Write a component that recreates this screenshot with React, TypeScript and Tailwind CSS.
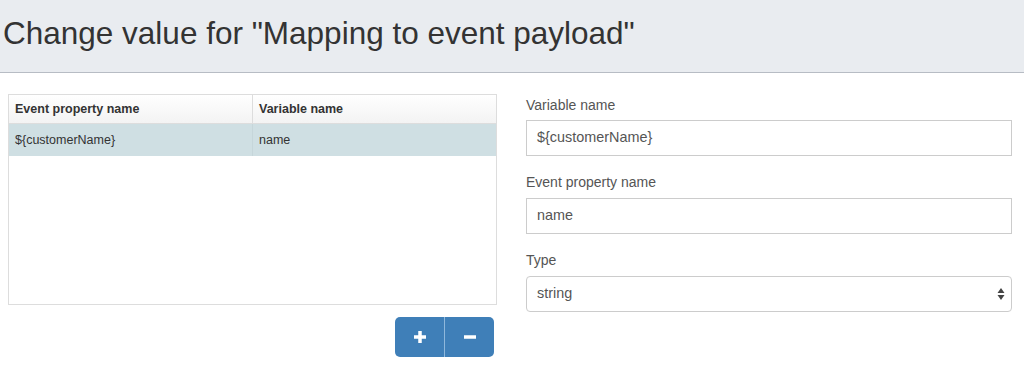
export default function App() {
  return (
    <div className="w-[1024px] h-[382px] bg-white text-[#333] overflow-hidden" style={{ fontFamily: '"Liberation Sans", Arial, sans-serif' }}>
      <div className="h-[73px] bg-[#e9ecf0] border-b border-[#b7bcc4] flex items-center pl-[3px] pb-[4px]">
        <h1 className="text-[31.5px] text-[#333] leading-none">Change value for "Mapping to event payload"</h1>
      </div>

      <div className="flex pt-[21px] pl-[8px]">
        <div className="w-[489px] flex flex-col">
          <div className="h-[211px] border border-[#ddd] bg-white">
            <div className="flex h-[29px] border-b border-[#ddd] bg-gradient-to-b from-white to-[#f3f3f3] text-[12.5px] font-bold">
              <div className="w-[244px] border-r border-[#ddd] flex items-center pl-[6px]">Event property name</div>
              <div className="flex-1 flex items-center pl-[6px]">Variable name</div>
            </div>
            <div className="flex h-[32px] bg-[#cfdfe3] text-[12.5px]">
              <div className="w-[244px] border-r border-[#c6d6da] flex items-center pl-[6px]">${'{'}customerName{'}'}</div>
              <div className="flex-1 flex items-center pl-[6px]">name</div>
            </div>
          </div>
          <div className="flex justify-end pr-[3px] mt-[12px]">
            <div className="flex h-[40px] rounded-[5px] overflow-hidden bg-[#3f7fb8]">
              <button className="w-[50px] flex items-center justify-center border-r border-[#8fb8dc]">
                <svg width="16" height="16" viewBox="0 0 16 16">
                  <path d="M8 2v12M2 8h12" stroke="white" strokeWidth="3.5" />
                </svg>
              </button>
              <button className="w-[49px] flex items-center justify-center">
                <svg width="16" height="16" viewBox="0 0 16 16">
                  <path d="M2 8h12" stroke="white" strokeWidth="3.5" />
                </svg>
              </button>
            </div>
          </div>
        </div>

        <div className="ml-[29px] w-[486px] flex flex-col text-[14px] text-[#555]">
          <label className="h-[26px] pt-[1px]">Variable name</label>
          <div className="h-[36px] border border-[#ccc] flex items-center px-[10px] text-[14.4px]">${'{'}customerName{'}'}</div>
          <label className="h-[27px] mt-[15px] pt-[1px]">Event property name</label>
          <div className="h-[36px] border border-[#ccc] flex items-center px-[10px] text-[14.4px]">name</div>
          <label className="h-[27px] mt-[15px] pt-[1px]">Type</label>
          <div className="h-[36px] border border-[#ccc] rounded-[4px] flex items-center justify-between pl-[10px] pr-[6px] text-[14.4px]">
            <span>string</span>
            <svg width="8" height="14" viewBox="0 0 8 14">
              <path d="M4 1L7.5 6H0.5Z M4 13L7.5 8H0.5Z" fill="#444" />
            </svg>
          </div>
        </div>
      </div>
    </div>
  );
}
